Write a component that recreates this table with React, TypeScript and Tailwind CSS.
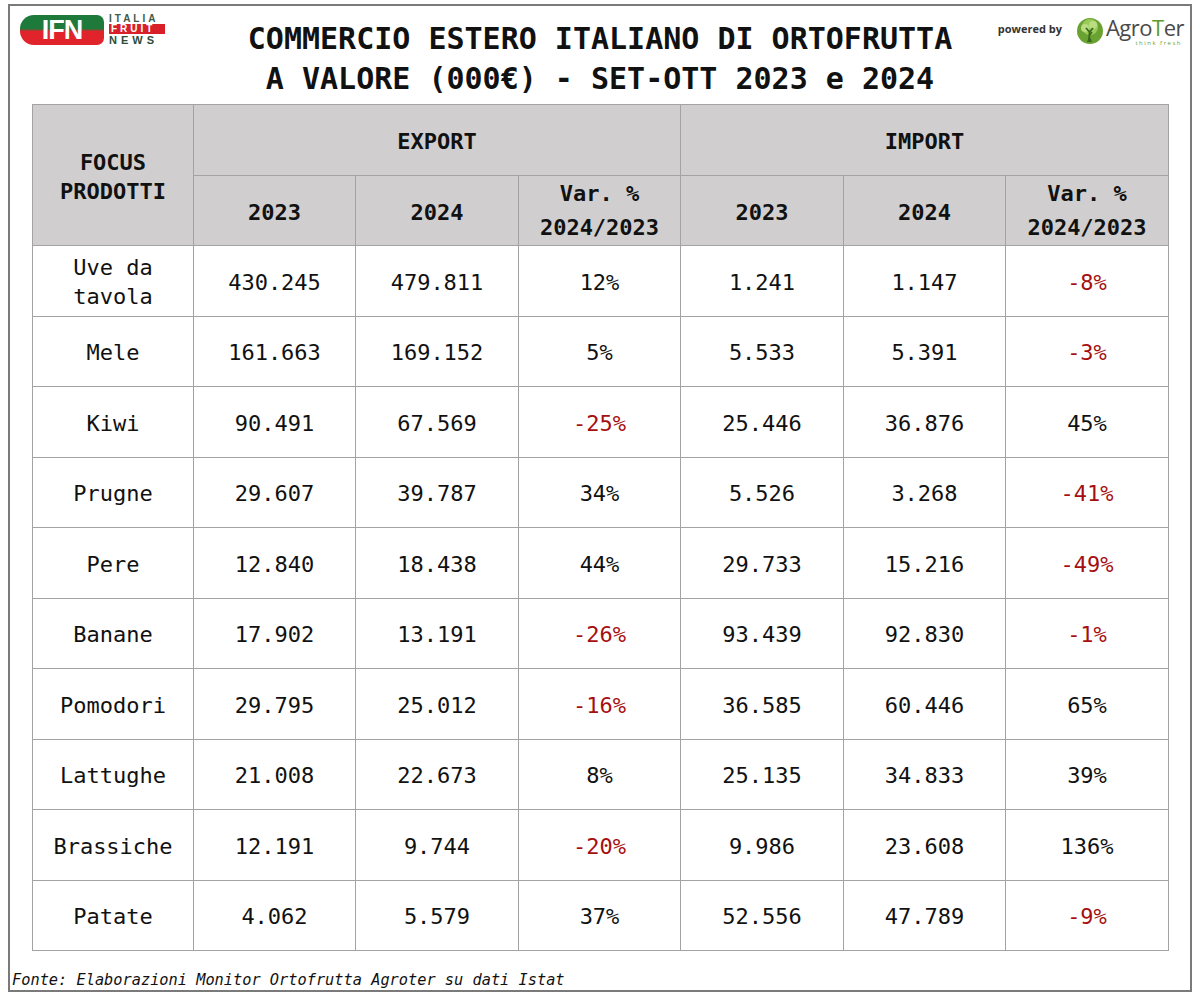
import React from "react";

type Row = { name: string[]; v: string[] };

const rows: Row[] = [
  { name: ["Uve da", "tavola"], v: ["430.245", "479.811", "12%", "1.241", "1.147", "-8%"] },
  { name: ["Mele"], v: ["161.663", "169.152", "5%", "5.533", "5.391", "-3%"] },
  { name: ["Kiwi"], v: ["90.491", "67.569", "-25%", "25.446", "36.876", "45%"] },
  { name: ["Prugne"], v: ["29.607", "39.787", "34%", "5.526", "3.268", "-41%"] },
  { name: ["Pere"], v: ["12.840", "18.438", "44%", "29.733", "15.216", "-49%"] },
  { name: ["Banane"], v: ["17.902", "13.191", "-26%", "93.439", "92.830", "-1%"] },
  { name: ["Pomodori"], v: ["29.795", "25.012", "-16%", "36.585", "60.446", "65%"] },
  { name: ["Lattughe"], v: ["21.008", "22.673", "8%", "25.135", "34.833", "39%"] },
  { name: ["Brassiche"], v: ["12.191", "9.744", "-20%", "9.986", "23.608", "136%"] },
  { name: ["Patate"], v: ["4.062", "5.579", "37%", "52.556", "47.789", "-9%"] },
];

const mono = { fontFamily: '"DejaVu Sans Mono", "Liberation Mono", monospace' };

function IfnLogo() {
  return (
    <div className="flex items-center gap-[5px]">
      <div
        className="w-[84px] h-[30px] rounded-l-[14px] rounded-r-[7px] flex items-center justify-center"
        style={{ background: "linear-gradient(180deg,#1d7a3a 0%,#1d7a3a 45%,#e1232b 55%,#e1232b 100%)" }}
      >
        <span
          className="text-white text-[27px] leading-[30px] font-black tracking-[-1px]"
          style={{ fontFamily: '"Liberation Sans", Arial, sans-serif' }}
        >
          IFN
        </span>
      </div>
      <div className="flex flex-col w-[56px]" style={{ fontFamily: '"Liberation Sans", Arial, sans-serif' }}>
        <span className="text-[10px] leading-[10px] tracking-[3px] text-[#3f5a48] font-bold">ITALIA</span>
        <span className="text-[10px] leading-[10px] tracking-[3px] text-white bg-[#d7202a] font-bold pl-[2px]">FRUIT</span>
        <span className="text-[11px] leading-[11px] tracking-[4px] text-[#2d4d3a] font-bold mt-[1px]">NEWS</span>
      </div>
    </div>
  );
}

function AgroterLogo() {
  return (
    <div className="flex items-center gap-[14px]" style={{ fontFamily: '"Open Sans", "Liberation Sans", sans-serif' }}>
      <span className="text-[11px] font-bold text-[#333] mt-[-4px]">powered by</span>
      <div className="flex items-center gap-[2px]">
        <svg width="28" height="28" viewBox="0 0 28 28">
          <circle cx="14" cy="14" r="13" fill="#6aa232" />
          <circle cx="14" cy="10" r="8" fill="#9acb5a" />
          <circle cx="9" cy="11" r="4" fill="#b9dd80" />
          <circle cx="17" cy="8" r="4" fill="#b9dd80" />
          <path d="M13 24 L13.5 15 L10 11 M13.5 15 L17 11 M13.6 18 L16 15" stroke="#3c6a1c" strokeWidth="1.8" fill="none" />
          <path d="M11 25 L16 25 L14.5 21 L12.5 21 Z" fill="#3c6a1c" />
        </svg>
        <div className="flex flex-col items-end">
          <span className="text-[22px] leading-[25px] text-[#4a4a4a] tracking-[-0.5px]">
            Agro<span className="text-[#5c9a2a]">T</span>er
          </span>
          <span className="text-[6px] leading-[7px] text-[#6aa232] tracking-[1.5px] pr-[2px]">think fresh</span>
        </div>
      </div>
    </div>
  );
}

export default function App() {
  const cell = "border border-[#a3a3a3] text-center align-middle";
  return (
    <div className="w-[1200px] h-[997px] bg-white pt-[4px] pl-[8px]" style={mono}>
      <div className="w-[1184px] h-[988px] border-2 border-[#7a7a7a] flex flex-col">
        <div className="grid grid-cols-[1fr_auto_1fr] items-start h-[98px] pt-[8px]">
          <div className="pl-[10px]">
            <IfnLogo />
          </div>
          <div className="text-center text-[30px] leading-[40px] font-bold text-[#111] mt-[5px]">
            <div>COMMERCIO ESTERO ITALIANO DI ORTOFRUTTA</div>
            <div>A VALORE (000€) - SET-OTT 2023 e 2024</div>
          </div>
          <div className="flex justify-end pr-[6px] pt-[1px]">
            <AgroterLogo />
          </div>
        </div>
        <div className="pl-[22px]">
          <table className="border-collapse text-[22px] text-[#111] table-fixed w-[1136px]">
            <colgroup>
              <col className="w-[161px]" />
              <col className="w-[162px]" />
              <col className="w-[163px]" />
              <col className="w-[162px]" />
              <col className="w-[163px]" />
              <col className="w-[162px]" />
              <col className="w-[163px]" />
            </colgroup>
            <thead>
              <tr className="h-[71px] bg-[#d0cece]">
                <th rowSpan={2} className={`${cell} leading-[29px] font-bold pt-[3px]`}>
                  FOCUS<br />PRODOTTI
                </th>
                <th colSpan={3} className={`${cell} font-bold pt-[3px]`}>EXPORT</th>
                <th colSpan={3} className={`${cell} font-bold pt-[3px]`}>IMPORT</th>
              </tr>
              <tr className="h-[70px] bg-[#d0cece]">
                <th className={`${cell} font-bold pt-[3px]`}>2023</th>
                <th className={`${cell} font-bold pt-[3px]`}>2024</th>
                <th className={`${cell} font-bold leading-[34px] pt-[1px]`}>Var. %<br />2024/2023</th>
                <th className={`${cell} font-bold pt-[3px]`}>2023</th>
                <th className={`${cell} font-bold pt-[3px]`}>2024</th>
                <th className={`${cell} font-bold leading-[34px] pt-[1px]`}>Var. %<br />2024/2023</th>
              </tr>
            </thead>
            <tbody>
              {rows.map((r) => (
                <tr key={r.name.join(" ")} className="h-[70.5px]">
                  <td className={`${cell} leading-[29px] pt-[3px]`}>
                    {r.name.map((n, i) => (
                      <div key={i}>{n}</div>
                    ))}
                  </td>
                  {r.v.map((v, i) => (
                    <td key={i} className={`${cell} pt-[3px] ${v.startsWith("-") ? "text-[#a50f0f]" : ""}`}>
                      {v}
                    </td>
                  ))}
                </tr>
              ))}
            </tbody>
          </table>
        </div>
        <div className="mt-[19px] pl-[2px] text-[15.3px] italic text-[#111] leading-[20px]">
          Fonte: Elaborazioni Monitor Ortofrutta Agroter su dati Istat
        </div>
      </div>
    </div>
  );
}
